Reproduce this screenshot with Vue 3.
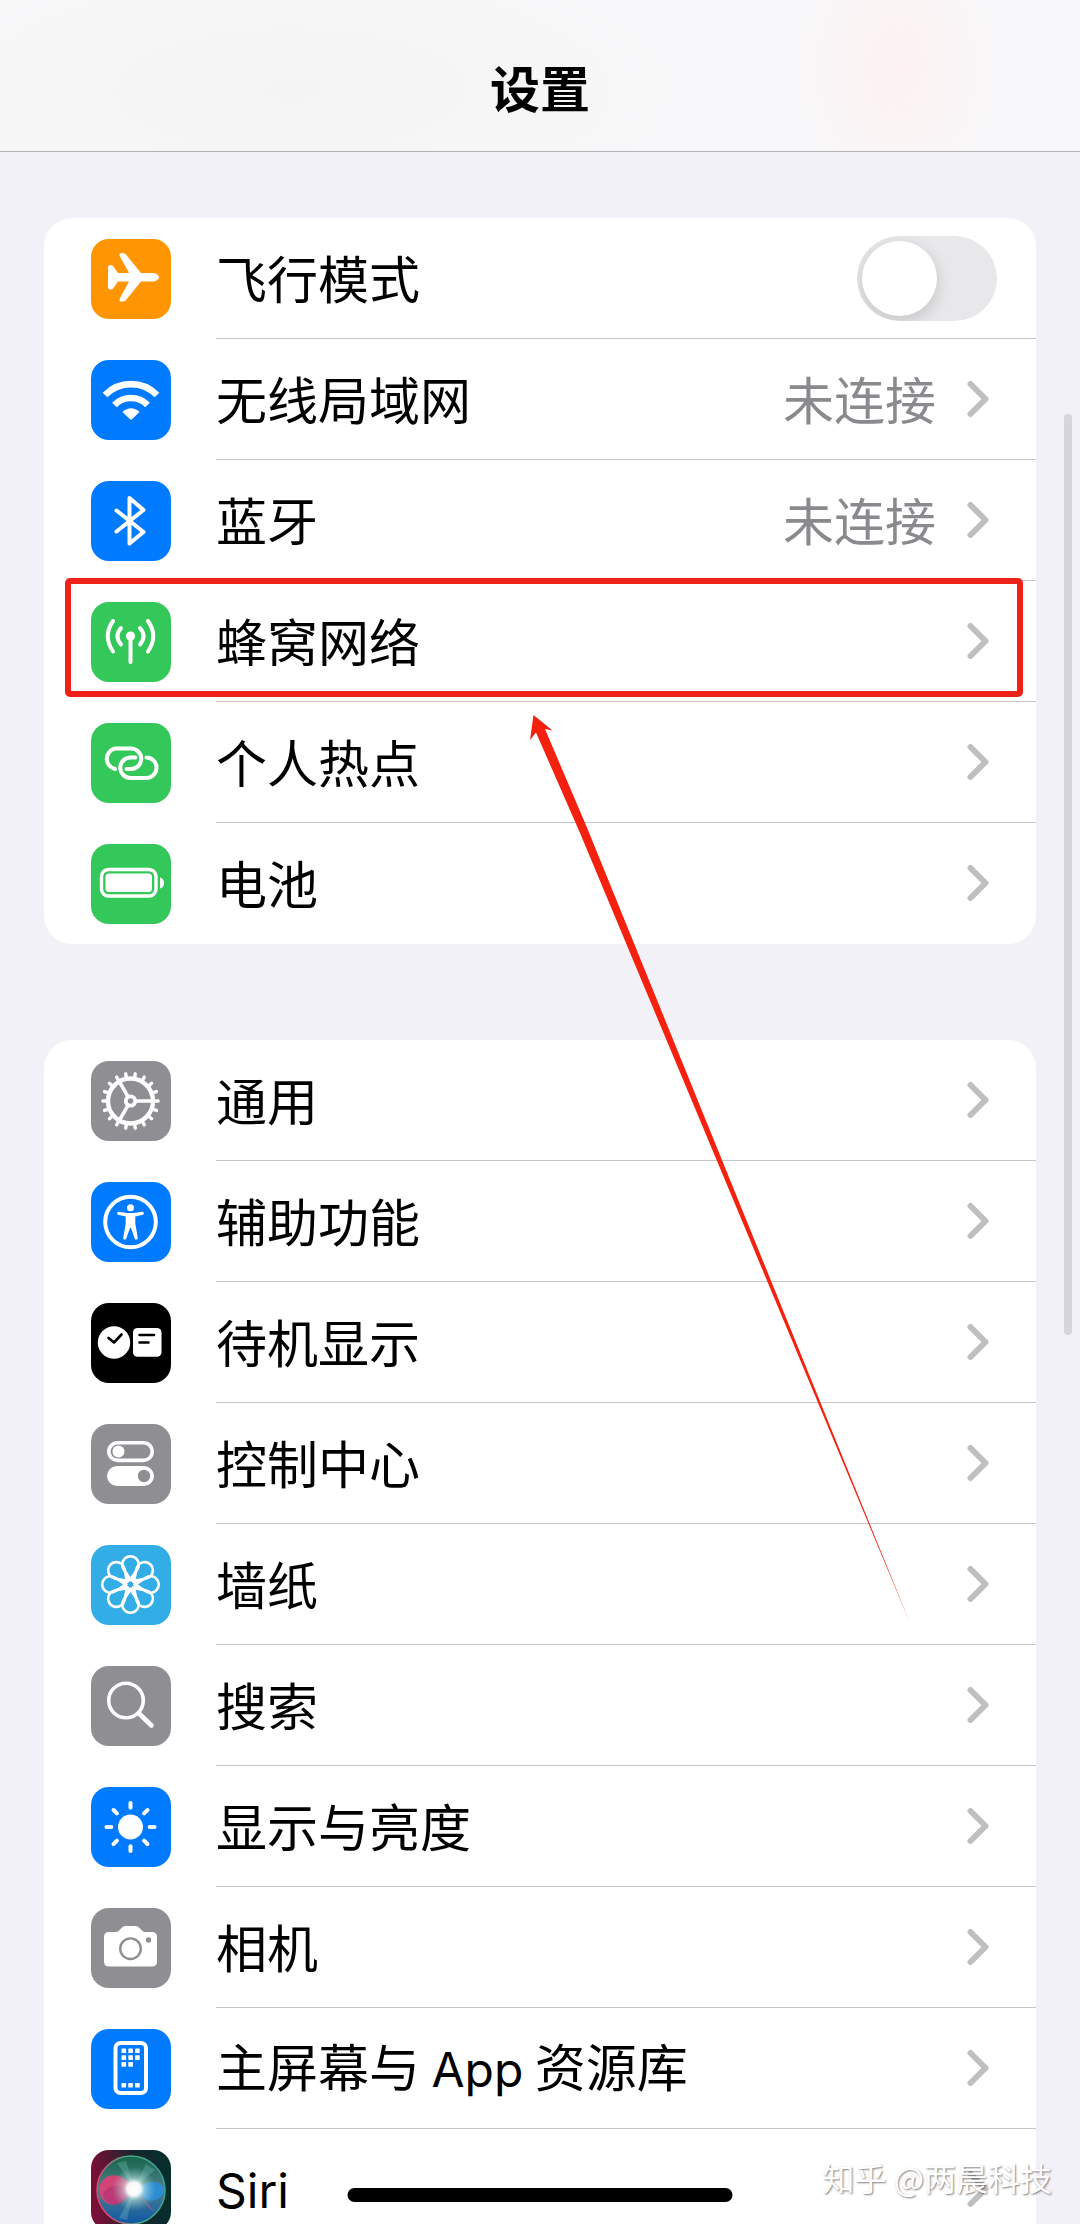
<template>
  <div class="screen">
    <header class="nav-bar">
      <h1 class="nav-title">设置</h1>
    </header>

    <main class="content">
      <ul v-for="(group, gi) in groups" :key="gi" class="card">
        <li v-for="item in group" :key="item.icon" class="row">
          <component :is="item.toggle ? 'label' : 'a'" :href="item.toggle ? null : '#'" class="row-link">
            <span :class="['icon', 'icon-' + item.icon]">
              <svg viewBox="0 0 80 80" fill="#fff" aria-hidden="true">
                <path v-if="item.icon === 'airplane'"
                      d="M17 28.5Q17 26 19 26H20Q21.500 26 22.500 27.500L27 34H38L29 17.500Q27.500 14 30.500 14H32Q33.500 14 35 15.500L50 34H61C65 34 68 36 68 38.200C68 40.500 65 42.500 61 42.500H50L35 61Q33.500 62.500 32 62.500H30.500Q27.500 62.500 29 59L38 42.500H27L22.500 49Q21.500 50.500 20 50.500H19Q17 50.500 17 48Z" />

                <template v-else-if="item.icon === 'wifi'">
                  <g fill="none" stroke="#fff" stroke-width="6.600">
                    <path d="M14 35A36.500 36.500 0 0 1 66 35" />
                    <path d="M23.500 45A23 23 0 0 1 56.500 45" />
                  </g>
                  <path d="M31.500 52Q40 44.500 48.500 52L41 59.300Q40 60 39 59.300Z" />
                </template>

                <path v-else-if="item.icon === 'bluetooth'" class="line" stroke-width="4"
                      d="M25.500 29.500L52.500 51L38.500 62.500V17L52.500 29L25.500 50.500" />

                <template v-else-if="item.icon === 'cellular'">
                  <circle cx="39.500" cy="34" r="4.600" />
                  <path class="line" stroke-width="4" d="M39.500 35V60" />
                  <path class="line" stroke-width="4"
                        d="M30 26Q23 34 30 42.500M49 26Q56 34 49 42.500M22 19Q11.500 34 22 49.500M57 19Q67.500 34 57 49.500" />
                </template>

                <path v-else-if="item.icon === 'hotspot'" class="line" stroke-width="4"
                      d="M24 46A10.500 10.500 0 0 1 24 25.500H40A10.200 10.200 0 0 1 40 46H35.500M44.500 34.500H39.500A10.200 10.200 0 0 0 39.500 55H55A10.200 10.200 0 0 0 55.500 34.500" />

                <template v-else-if="item.icon === 'battery'">
                  <rect x="10.500" y="25.500" width="54.500" height="26.500" rx="7" class="line" stroke-width="3.400" />
                  <rect x="14.500" y="29.500" width="46.500" height="18.500" rx="3.500" />
                  <path d="M69 33.500Q73 34.500 73 39Q73 43.500 69 44.500Z" />
                </template>

                <g v-else-if="item.icon === 'gear'" transform="translate(39.500 40)" class="line">
                  <circle r="22.500" stroke-width="4.400" />
                  <path v-for="n in 18" :key="n" d="M25 0H27.600" stroke-width="3.400" :transform="`rotate(${n * 20})`" />
                  <path v-for="n in 3" :key="'s' + n" d="M5 0H22" stroke-width="3.600" :transform="`rotate(${n * 120})`" />
                  <circle r="4.700" stroke-width="3.800" />
                </g>

                <template v-else-if="item.icon === 'access'">
                  <circle cx="39.500" cy="40" r="25.300" class="line" stroke-width="4" />
                  <circle cx="39.500" cy="25.700" r="3.500" />
                  <path d="M27.500 29.800L36 31H43L51.500 29.800A1.600 1.600 0 0 1 52 32.800L44.300 34.500V41.500L46.800 56A1.600 1.600 0 0 1 43.800 56.800L40 46H39L35.200 56.800A1.600 1.600 0 0 1 32.200 56L34.700 41.500V34.500L27 32.800A1.600 1.600 0 0 1 27.500 29.800Z" />
                </template>

                <template v-else-if="item.icon === 'standby'">
                  <circle cx="23" cy="39.500" r="16.200" />
                  <rect x="42" y="25" width="28.500" height="28.800" rx="4.500" />
                  <path class="line" stroke-width="2.600"
                        d="M17.500 35L23 39.500L30.500 31.500M48.500 32H63M48.500 39.500H57.500" />
                </template>

                <template v-else-if="item.icon === 'control'">
                  <rect x="17.800" y="18.800" width="43.500" height="17.600" rx="8.800" class="line" stroke-width="3.600" />
                  <circle cx="27.500" cy="27.600" r="6" />
                  <rect x="16" y="42" width="47" height="20" rx="10" />
                  <circle cx="53" cy="52" r="6.200" fill="#8e8e93" />
                </template>

                <g v-else-if="item.icon === 'wallpaper'" transform="translate(39.500 39.500)" class="line" stroke-width="2.600">
                  <path v-for="n in 8" :key="n" :transform="`rotate(${n * 45})`"
                        d="M0 -4L-7 -15.500A8.300 8.300 0 1 1 7 -15.500Z" />
                  <path v-for="n in 8" :key="'v' + n" :transform="`rotate(${n * 45 + 22.5})`"
                        d="M-2.500 -5L0 -16L2.500 -5" stroke-width="1.600" />
                  <circle r="5" stroke-width="2.800" />
                </g>

                <template v-else-if="item.icon === 'search'">
                  <circle cx="35" cy="34.500" r="17.300" class="line" stroke-width="3.600" />
                  <path class="line" stroke-width="4.600" d="M48 47.500L60.500 59.500" />
                </template>

                <g v-else-if="item.icon === 'display'" transform="translate(39.500 40)">
                  <circle r="12.500" />
                  <path v-for="n in 8" :key="n" class="line" stroke-width="4" d="M19.200 0H24" :transform="`rotate(${n * 45})`" />
                </g>

                <template v-else-if="item.icon === 'camera'">
                  <path d="M18 24H25Q27 24 28.500 22L30.500 20Q32 18 34.500 18H44.500Q47 18 48.500 20L50.500 22Q52 24 54 24H61Q66 24 66 29V53.500Q66 58.500 61 58.500H18Q13 58.500 13 53.500V29Q13 24 18 24Z" />
                  <circle cx="39.500" cy="40.700" r="10.300" fill="none" stroke="#8e8e93" stroke-width="2.400" />
                  <circle cx="57.500" cy="32" r="2.700" fill="#8e8e93" />
                </template>

                <template v-else-if="item.icon === 'home'">
                  <rect x="24.500" y="14" width="30.500" height="50" rx="5" class="line" stroke-width="4" />
                  <rect v-for="(dot, n) in homeDots" :key="n" :x="dot[0]" :y="dot[1]" width="4.600" height="4.600" rx=".6" />
                </template>

                <template v-else-if="item.icon === 'siri'">
                  <defs>
                    <linearGradient id="siri-bg" x1="0" y1=".1" x2="1" y2="0">
                      <stop offset="0" stop-color="#7a0f38" />
                      <stop offset=".55" stop-color="#14262c" />
                      <stop offset="1" stop-color="#04302c" />
                    </linearGradient>
                    <linearGradient id="siri-orb" x1=".5" y1="0" x2=".5" y2="1">
                      <stop offset="0" stop-color="#17654c" />
                      <stop offset=".5" stop-color="#4a8088" />
                      <stop offset="1" stop-color="#0f56a8" />
                    </linearGradient>
                    <linearGradient id="siri-rim" x1="0" y1=".3" x2="1" y2=".1">
                      <stop offset="0" stop-color="#e2446f" />
                      <stop offset=".5" stop-color="#46ad87" />
                      <stop offset="1" stop-color="#389c93" />
                    </linearGradient>
                    <radialGradient id="siri-glow">
                      <stop offset="0" stop-color="#fff" />
                      <stop offset=".3" stop-color="#fff" stop-opacity=".95" />
                      <stop offset=".5" stop-color="#d5f6f0" stop-opacity=".5" />
                      <stop offset="1" stop-color="#8fd8cf" stop-opacity="0" />
                    </radialGradient>
                  </defs>
                  <rect width="80" height="80" fill="url(#siri-bg)" />
                  <circle cx="40" cy="40" r="34" fill="url(#siri-orb)" stroke="url(#siri-rim)" stroke-width="1.600" />
                  <path fill="#e03f76" opacity=".9" d="M43 40C36 26 20 20 11 31C3 43 14 58 26 54C34 51 38 44 43 40Z" />
                  <path fill="#a52a74" opacity=".45" d="M43 41C32 33 16 34 12 44C14 56 28 58 35 50Z" />
                  <path fill="#2b8ed8" opacity=".9" d="M45 40C54 32 66 28 72 37C75 47 64 53 56 50C51 48 49 43 45 40Z" />
                  <path fill="#9eeadd" opacity=".22" d="M43 38L26 13L35 11ZM43 38L55 14L64 20ZM43 40L28 68L36 70Z" />
                  <path fill="#c4658b" opacity=".5" d="M47 43L64 62L57 57Z" />
                  <circle cx="43" cy="39" r="22" fill="url(#siri-glow)" />
                </template>
              </svg>
            </span>

            <span class="row-body">
              <span class="row-label">
                <template v-for="(part, pi) in item.label" :key="pi">
                  <span v-if="part.latin" class="latin">{{ part.latin }}</span>
                  <template v-else>{{ part }}</template>
                </template>
              </span>
              <span v-if="item.value" class="row-value">{{ item.value }}</span>
              <input v-if="item.toggle" v-model="airplaneMode" type="checkbox" role="switch" class="switch">
              <svg v-else class="chevron" viewBox="0 0 30 38" aria-hidden="true">
                <path d="M3.500 4L18.500 19L3.500 34" />
              </svg>
            </span>
          </component>
          <span v-if="item.highlight" class="highlight"></span>
        </li>
      </ul>

      <!-- 指向蜂窝网络的箭头 -->
      <svg class="arrow" viewBox="0 0 384 910" aria-hidden="true">
        <path d="M5.500 0L24.500 15.500L17 14L60 115L382 908L52 118L8 17.500L2 25Z" />
      </svg>
    </main>

    <div class="scroll-thumb"></div>
    <div class="home-indicator"></div>
    <div class="watermark">知乎 @两晨科技</div>
  </div>
</template>

<script setup>
import { ref } from 'vue'

const airplaneMode = ref(false)

const groups = [
  [
    { icon: 'airplane', label: ['飞行模式'], toggle: true },
    { icon: 'wifi', label: ['无线局域网'], value: '未连接' },
    { icon: 'bluetooth', label: ['蓝牙'], value: '未连接' },
    { icon: 'cellular', label: ['蜂窝网络'], highlight: true },
    { icon: 'hotspot', label: ['个人热点'] },
    { icon: 'battery', label: ['电池'] }
  ],
  [
    { icon: 'gear', label: ['通用'] },
    { icon: 'access', label: ['辅助功能'] },
    { icon: 'standby', label: ['待机显示'] },
    { icon: 'control', label: ['控制中心'] },
    { icon: 'wallpaper', label: ['墙纸'] },
    { icon: 'search', label: ['搜索'] },
    { icon: 'display', label: ['显示与亮度'] },
    { icon: 'camera', label: ['相机'] },
    { icon: 'home', label: ['主屏幕与 ', { latin: 'App' }, ' 资源库'] },
    { icon: 'siri', label: [{ latin: 'Siri' }] }
  ]
]

// 主屏幕图标里的小方块
const homeDots = [
  [30.5, 19.5], [37.3, 19.5], [44.1, 19.5],
  [30.5, 26.3], [37.3, 26.3], [44.1, 26.3],
  [30.5, 33.1], [37.3, 33.1],
  [30.5, 54], [37.3, 54], [44.1, 54]
]
</script>

<style>
body {
  background: #f2f1f8;
}
</style>

<style scoped>
.screen {
  position: relative;
  display: flex;
  flex-direction: column;
  height: 100vh;
  overflow: hidden;
  background: #f2f1f8;
  color: #000;
  font-family: "Noto Sans CJK SC", Inter, sans-serif;
}

.nav-bar {
  display: flex;
  align-items: center;
  justify-content: center;
  box-sizing: border-box;
  min-height: 152px;
  padding-top: 20px;
  border-bottom: 1px solid #b1b1b5;
  background:
    radial-gradient(ellipse 110px 150px at 83% 45%, #fdf1f1, transparent),
    radial-gradient(ellipse 420px 150px at 27% 60%, #f4f4f4, transparent),
    #f8f8fa;
}

.nav-title {
  margin: 0;
  font-size: 50px;
  font-weight: 600;
  line-height: 72px;
}

.content {
  position: relative;
  flex: 1;
  min-height: 0;
  padding: 66px 44px 0;
  overflow-y: auto;
  scrollbar-width: none;
}

.card {
  margin: 0 0 96px;
  padding: 0;
  list-style: none;
  border-radius: 28px;
  background: #fff;
}

.row {
  position: relative;
}

.row-link {
  display: flex;
  align-items: center;
  gap: 45px;
  padding-left: 47px;
  color: inherit;
  text-decoration: none;
}

.icon {
  flex: none;
  width: 80px;
  height: 80px;
  border-radius: 18px;
  overflow: hidden;
}

.icon svg {
  display: block;
}

.line {
  fill: none;
  stroke: #fff;
  stroke-linecap: round;
  stroke-linejoin: round;
}

.icon-standby .line {
  stroke: #000;
}

.icon-airplane {
  background: #ff9500;
}

.icon-wifi,
.icon-bluetooth,
.icon-access,
.icon-display,
.icon-home {
  background: #007aff;
}

.icon-cellular,
.icon-hotspot,
.icon-battery {
  background: #34c759;
}

.icon-gear,
.icon-control,
.icon-search,
.icon-camera {
  background: #8e8e93;
}

.icon-standby {
  background: #000;
}

.icon-wallpaper {
  background: #32ade6;
}

.row-body {
  display: flex;
  flex: 1;
  align-items: center;
  box-sizing: border-box;
  min-height: 121px;
  padding-right: 39px;
  border-bottom: 1px solid #c6c6c8;
}

.row:last-child .row-body {
  border-bottom-color: transparent;
}

.row-label,
.row-value {
  padding-bottom: 2px;
  font-size: 51px;
  line-height: 72px;
}

.row-label {
  flex: 1;
  white-space: pre-wrap;
}

.latin {
  font-family: Inter, sans-serif;
  font-size: 48px;
}

.row-value {
  margin-right: 31px;
  color: #8a8a8e;
}

.chevron {
  flex: none;
  width: 30px;
  height: 38px;
}

.chevron path {
  fill: none;
  stroke: #bfbfc1;
  stroke-width: 6;
  stroke-linecap: round;
  stroke-linejoin: round;
}

.switch {
  appearance: none;
  display: flex;
  align-items: center;
  box-sizing: border-box;
  width: 140px;
  height: 85px;
  margin: 0;
  padding: 5px;
  border-radius: 43px;
  overflow: hidden;
  background: #e8e8ea;
}

.switch::before {
  content: "";
  width: 75px;
  height: 75px;
  border-radius: 50%;
  background: #fff;
  box-shadow: 0 5px 16px rgba(0, 0, 0, 0.16);
}

.switch:checked {
  justify-content: flex-end;
  background: #34c759;
}

/* 红色标注框 */
.highlight {
  position: absolute;
  top: -3px;
  right: 13px;
  bottom: 5px;
  left: 21px;
  border: 6px solid #ee2219;
  border-radius: 5px;
  pointer-events: none;
}

.arrow {
  position: absolute;
  top: 563px;
  left: 528px;
  width: 384px;
  height: 910px;
  fill: #f4210f;
  pointer-events: none;
}

.scroll-thumb {
  position: absolute;
  top: 414px;
  right: 8px;
  width: 8px;
  height: 921px;
  border-radius: 4px;
  background: #d5d5da;
}

.home-indicator {
  position: absolute;
  bottom: 22px;
  left: 50%;
  width: 385px;
  height: 14px;
  border-radius: 7px;
  background: #000;
  transform: translateX(-50%);
}

.watermark {
  position: absolute;
  right: 28px;
  bottom: 24px;
  color: #fff;
  font-size: 32px;
  line-height: 46px;
  text-shadow: 1px 1px 2px rgba(0, 0, 0, 0.5);
}
</style>
